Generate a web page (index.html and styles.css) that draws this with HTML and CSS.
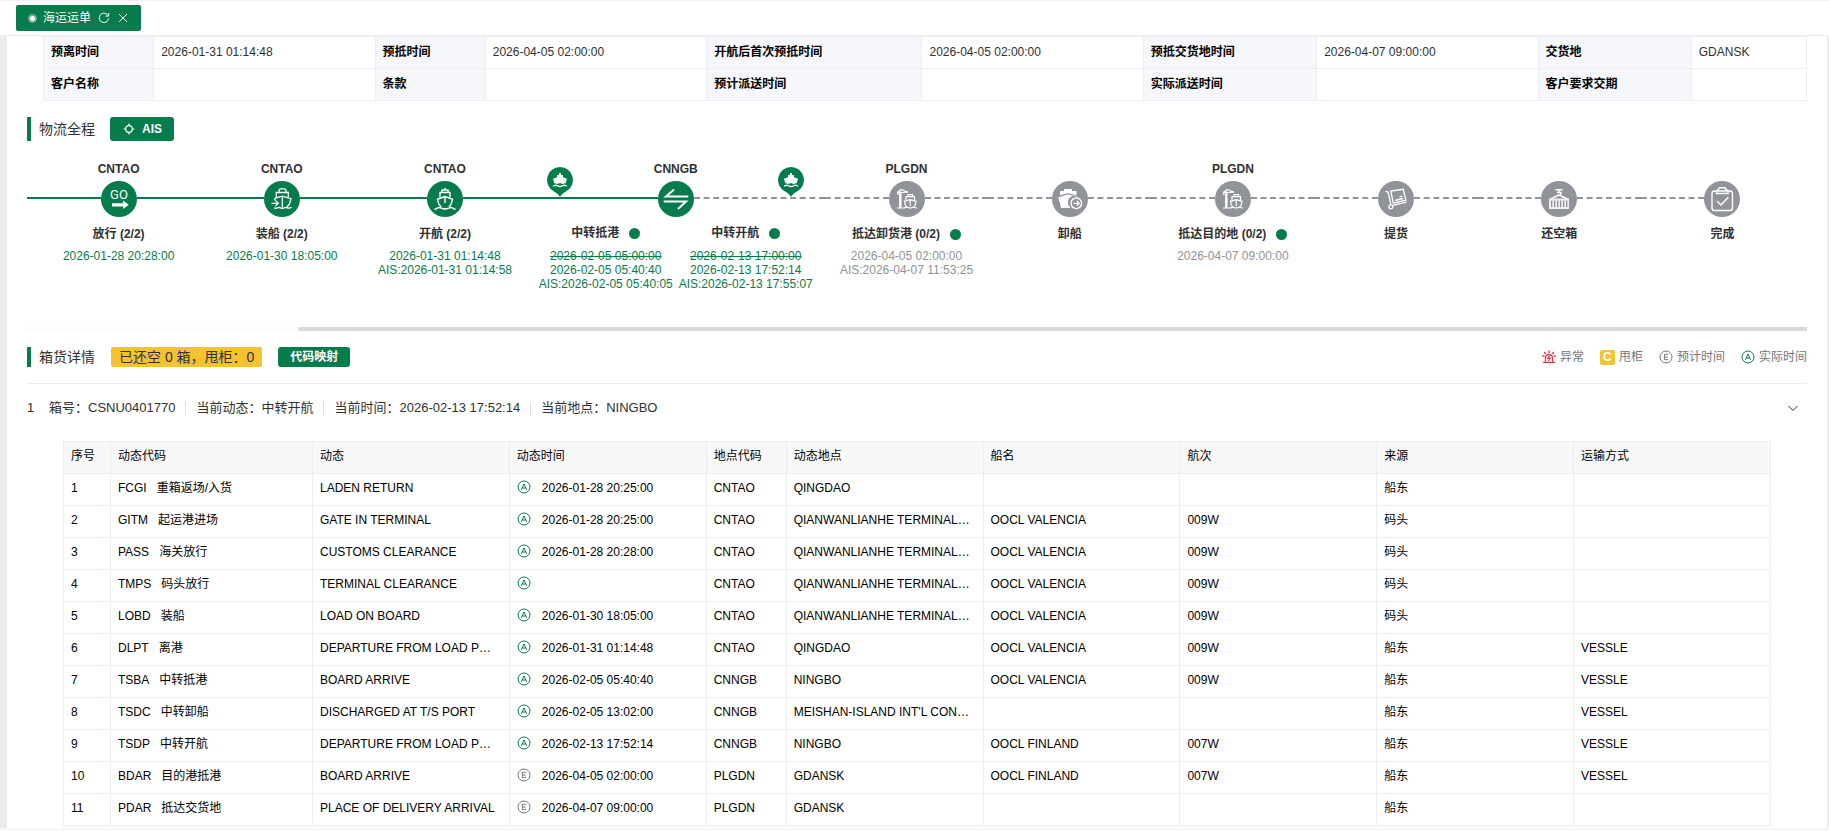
FILE: index.html
```html
<!DOCTYPE html>
<html lang="zh-CN">
<head>
<meta charset="utf-8">
<title>海运运单</title>
<link rel="stylesheet" href="styles.css">
</head>
<body>
<svg class="sprite" aria-hidden="true">
  <symbol id="i-actual" viewBox="0 0 14 14"><circle cx="7" cy="7" r="6" fill="none" stroke="currentColor"/><path d="M4.4 9.8 7 3.9l2.6 5.9M5.3 8h3.4" fill="none" stroke="currentColor"/></symbol>
  <symbol id="i-estimate" viewBox="0 0 14 14"><circle cx="7" cy="7" r="6" fill="none" stroke="currentColor"/><path d="M9.2 4.3H5.4v5.4h3.8M5.4 7h3.4" fill="none" stroke="currentColor"/></symbol>
  <symbol id="i-pin" viewBox="0 0 26 30"><path d="M13 0a13 13 0 0 1 5.6 24.7C16 26 14.500 27.500 13 30c-1.500-2.500-3-4-5.600-5.300A13 13 0 0 1 13 0Z" fill="#067b4b"/><path d="M12 6h2v2h2v2.200l4 1.500-1.400 4.600c-1 0-1.600.6-2.600.6-1.200 0-1.800-.7-3-.7s-1.800.7-3 .7c-1 0-1.600-.6-2.600-.6L6 11.700l4-1.500V8h2Z" fill="#fff"/><path d="M6 18.900c1.200 0 1.700-.7 2.800-.7 1.400 0 2 1.300 4.200 1.300s2.800-1.300 4.200-1.300c1.100 0 1.600.7 2.800.7" fill="none" stroke="#fff" stroke-width="1.400"/></symbol>
  <symbol id="i-crane" viewBox="0 0 36 36"><g fill="none" stroke="#fff" stroke-width="1.200"><path d="M11.300 10.500V27" stroke-width="2.400"/><path d="M8 27h6.500M8.300 11.500h4M8.700 11v3M12.300 8.200 8.500 11.300M12.300 8.500l6.700 2.700M12.300 11.500l6.700-.3"/><path d="M17 19.200v-3.500h8.500v3.500M19 15.500v-1.800h4.500v1.800"/><path d="M21.200 18.700l-5.700 1.600.5 3 1.700 3M21.200 18.700l5.800 1.600-.5 3-1.700 3M21.200 18.700V25"/><path d="M14.500 27c1.500 0 2-.8 3.300-.8s2 .8 3.400.8 2.100-.8 3.400-.8 1.800.8 3.200.8"/></g></symbol>
</svg>

<header class="tabs">
  <div class="tab">
    <a class="tab-link" href="#waybill"><span class="tab-dot"></span>海运运单</a>
    <button class="tab-btn" type="button" aria-label="刷新"><svg width="12" height="12" viewBox="0 0 12 12"><path d="M10.600 6.500A4.700 4.700 0 1 1 9.400 2.700L10.500 4M10.700 1v3.100H7.600" fill="none" stroke="#fff"/></svg></button>
    <button class="tab-btn" type="button" aria-label="关闭"><svg width="12" height="12" viewBox="0 0 12 12"><path d="m2 2 8 8M10 2l-8 8" fill="none" stroke="#fff"/></svg></button>
  </div>
</header>

<main class="page" id="waybill">
  <table class="info">
    <colgroup><col class="c1"><col class="c2"><col class="c1"><col class="c2"><col class="c3"><col class="c2"><col class="c4"><col class="c2"><col class="c5"><col class="c6"></colgroup>
    <tr><th>预离时间</th><td>2026-01-31 01:14:48</td><th>预抵时间</th><td>2026-04-05 02:00:00</td><th>开航后首次预抵时间</th><td>2026-04-05 02:00:00</td><th>预抵交货地时间</th><td>2026-04-07 09:00:00</td><th>交货地</th><td>GDANSK</td></tr>
    <tr><th>客户名称</th><td></td><th>条款</th><td></td><th>预计派送时间</th><td></td><th>实际派送时间</th><td></td><th>客户要求交期</th><td></td></tr>
  </table>

  <section class="progress">
    <div class="head head-progress">
      <h2 class="title">物流全程</h2>
      <button class="btn btn-ais" type="button"><svg width="12" height="12" viewBox="0 0 12 12"><circle cx="6" cy="6" r="3.300" fill="none" stroke="#fff" stroke-width="1.200"/><path d="M6 .5v2.200M6 9.300v2.200M.5 6h2.200M9.300 6h2.200" stroke="#fff" stroke-width="1.200"/></svg>AIS</button>
    </div>

    <div class="steps">
      <div class="lead"></div>
      <div class="step done">
        <div class="port">CNTAO</div>
        <div class="track"><svg class="node" viewBox="0 0 36 36"><text x="18" y="18" class="go">GO</text><path d="M11 22.200h11V19.500l5.800 4.300-5.800 4.300v-2.700H11Z" fill="#fff"/></svg></div>
        <div class="label">放行 (2/2)</div>
        <div class="times"><span>2026-01-28 20:28:00</span></div>
      </div>
      <div class="step done">
        <div class="port">CNTAO</div>
        <div class="track"><svg class="node" viewBox="0 0 36 36"><g fill="none" stroke="#fff" stroke-width="1.300"><path d="M12.300 16V11.500h12V16M15 11.500V9l1.200-1.200h4.500L22 9v2.500"/><path d="M10.500 19.500l.8-2.500 7-1.800 8.700 2.500-1.500 5.300-2.500 3M18.300 15.200V26.500"/><path d="M7.500 22.300h6.500M11.500 19.500l2.800 2.800-2.800 2.800"/><path d="M10 27c1.300.4 3 .2 4.200-.4 1.300-.6 2.400.7 4.100.7s2.800-1.300 4.200-.7c1.500.7 3.500.7 5-.3"/></g></svg></div>
        <div class="label">装船 (2/2)</div>
        <div class="times"><span>2026-01-30 18:05:00</span></div>
      </div>
      <div class="step done">
        <div class="port">CNTAO</div>
        <div class="track"><svg class="node" viewBox="0 0 36 36"><g fill="none" stroke="#fff" stroke-width="1.400"><path d="M13 16.500v-5h10v5M15 11.500V9h6v2.500M18 7v2"/><path d="M18 15.500 10.500 18.300l1.300 4.700 2.200 3M18 15.500l7.500 2.800-1.300 4.700-2.200 3M18 15.500V22"/><path d="M7.500 28.200c2-.2 2.800-1.700 4.500-1.700 2 0 3 1.500 6 1.500s4-1.500 6-1.500c1.700 0 2.500 1.500 4.500 1.700"/></g></svg></div>
        <div class="label">开航 (2/2)</div>
        <div class="times"><span>2026-01-31 01:14:48</span><span>AIS:2026-01-31 01:14:58</span></div>
      </div>
      <div class="step wide half">
        <div class="port">CNNGB</div>
        <div class="track"><svg class="pin pin-a"><use href="#i-pin"/></svg><svg class="node" viewBox="0 0 36 36"><path d="M29.500 15.500H8L15.500 9M6.500 20.500H28L20.500 27.500" fill="none" stroke="#fff" stroke-width="2" stroke-linecap="round"/></svg><svg class="pin pin-b"><use href="#i-pin"/></svg></div>
        <div class="pair">
          <div class="leg"><div class="label">中转抵港<i class="dot"></i></div><div class="times"><del>2026-02-05 05:00:00</del><span>2026-02-05 05:40:40</span><span>AIS:2026-02-05 05:40:05</span></div></div>
          <div class="leg"><div class="label">中转开航<i class="dot"></i></div><div class="times"><del>2026-02-13 17:00:00</del><span>2026-02-13 17:52:14</span><span>AIS:2026-02-13 17:55:07</span></div></div>
        </div>
      </div>
      <div class="step">
        <div class="port">PLGDN</div>
        <div class="track"><svg class="node" viewBox="0 0 36 36"><use href="#i-crane"/></svg></div>
        <div class="label">抵达卸货港 (0/2)<i class="dot"></i></div>
        <div class="times"><span>2026-04-05 02:00:00</span><span>AIS:2026-04-07 11:53:25</span></div>
      </div>
      <div class="step">
        <div class="port"></div>
        <div class="track"><svg class="node" viewBox="0 0 36 36"><path d="M12 8h8v2h4.500v4.200L16 12.200l-8 2V10h4ZM16 13.500l10.500 2.400A6.500 6.500 0 0 0 18.800 27H9l-1-5-2-5.500Z" fill="#fff"/><circle cx="24.300" cy="22.300" r="5.300" fill="none" stroke="#fff" stroke-width="1.400"/><path d="M21.500 22.300h5.500M24.800 19.900l2.400 2.400-2.400 2.400" fill="none" stroke="#fff" stroke-width="1.300"/></svg></div>
        <div class="label">卸船</div>
      </div>
      <div class="step">
        <div class="port">PLGDN</div>
        <div class="track"><svg class="node" viewBox="0 0 36 36"><use href="#i-crane"/></svg></div>
        <div class="label">抵达目的地 (0/2)<i class="dot"></i></div>
        <div class="times"><span>2026-04-07 09:00:00</span></div>
      </div>
      <div class="step">
        <div class="port"></div>
        <div class="track"><svg class="node" viewBox="0 0 36 36"><g fill="none" stroke="#fff" stroke-width="1.300"><path d="M7.500 10.300l2.700.7 2.600 12.500M14 24.700l14.500-3.500"/><circle cx="12.800" cy="25.800" r="2"/><path d="M12.800 10l12.500-1.700 2.500 10.900-12.500 3Z"/><path d="M17 19.500l8-2M21.500 16l3-.8"/></g></svg></div>
        <div class="label">提货</div>
      </div>
      <div class="step">
        <div class="port"></div>
        <div class="track"><svg class="node" viewBox="0 0 36 36"><path d="M14.500 8.700h7M18 8.700v3.300M16 11.500h4v1.500l-2 1.500M18 14l-8.500 4M18 14l8.500 4" fill="none" stroke="#fff" stroke-width="1.400"/><path d="M8 17.500h20V28H8ZM10 19.500v6.500h1.300v-6.500ZM13 19.500v6.500h1.300v-6.500ZM16 19.500v6.500h1.300v-6.500ZM19 19.500v6.500h1.300v-6.500ZM22 19.500v6.500h1.300v-6.500ZM25 19.500v6.500h1.300v-6.500Z" fill="#fff" fill-rule="evenodd" opacity=".85"/></svg></div>
        <div class="label">还空箱</div>
      </div>
      <div class="step last">
        <div class="port"></div>
        <div class="track"><svg class="node" viewBox="0 0 36 36"><g fill="none" stroke="#fff" stroke-width="1.400"><rect x="8" y="10" width="20.500" height="19.500" rx="2.500"/><path d="M12.500 12.500h11.500V9.500l-1-.5h-.8l-1-2.200h-6l-1 2.200h-.7l-1 .5Z"/><path d="M13.500 20.500l3.500 3.500 7-7.500" stroke-linecap="round"/></g></svg></div>
        <div class="label">完成</div>
      </div>
    </div>
    <div class="scroll"><div class="thumb"></div></div>
  </section>

  <section class="cargo">
    <div class="head head-cargo">
      <h2 class="title">箱货详情</h2>
      <span class="tag">已还空 0 箱，甩柜：0</span>
      <button class="btn btn-map" type="button">代码映射</button>
      <ul class="legend">
        <li><svg width="14" height="14" viewBox="0 0 14 14"><path d="M3.500 12V8a3.500 3.500 0 0 1 7 0v4M1 12.400h12M7 .5v2.700M2.200 2l1.600 2M11.800 2l-1.600 2M.3 6h2.200M13.700 6h-2.200M7.500 5.800 6 8.400h2L6.500 11" fill="none" stroke="#f0324b" stroke-width="1.300"/></svg>异常</li>
        <li><b class="c-mark">C</b>甩柜</li>
        <li><svg class="mark"><use href="#i-estimate"/></svg>预计时间</li>
        <li><svg class="mark green"><use href="#i-actual"/></svg>实际时间</li>
      </ul>
    </div>

    <button class="summary" type="button" aria-expanded="true">
      <span class="num">1</span>
      <span class="item">箱号：CSNU0401770</span>
      <span class="item">当前动态：中转开航</span>
      <span class="item">当前时间：2026-02-13 17:52:14</span>
      <span class="item">当前地点：NINGBO</span>
      <svg class="chevron" width="12" height="12" viewBox="0 0 12 12"><path d="m1.500 4 4.500 4.500L10.500 4" fill="none" stroke="#303133"/></svg>
    </button>

    <div class="detail">
      <table class="events">
        <colgroup><col class="e1"><col class="e2"><col><col><col class="e5"><col><col><col><col><col></colgroup>
        <thead><tr><th>序号</th><th>动态代码</th><th>动态</th><th>动态时间</th><th>地点代码</th><th>动态地点</th><th>船名</th><th>航次</th><th>来源</th><th>运输方式</th></tr></thead>
        <tbody>
          <tr><td>1</td><td><span class="code">FCGI</span>重箱返场/入货</td><td>LADEN RETURN</td><td><svg class="mark green"><use href="#i-actual"/></svg>2026-01-28 20:25:00</td><td>CNTAO</td><td>QINGDAO</td><td></td><td></td><td>船东</td><td></td></tr>
          <tr><td>2</td><td><span class="code">GITM</span>起运港进场</td><td>GATE IN TERMINAL</td><td><svg class="mark green"><use href="#i-actual"/></svg>2026-01-28 20:25:00</td><td>CNTAO</td><td>QIANWANLIANHE TERMINAL…</td><td>OOCL VALENCIA</td><td>009W</td><td>码头</td><td></td></tr>
          <tr><td>3</td><td><span class="code">PASS</span>海关放行</td><td>CUSTOMS CLEARANCE</td><td><svg class="mark green"><use href="#i-actual"/></svg>2026-01-28 20:28:00</td><td>CNTAO</td><td>QIANWANLIANHE TERMINAL…</td><td>OOCL VALENCIA</td><td>009W</td><td>码头</td><td></td></tr>
          <tr><td>4</td><td><span class="code">TMPS</span>码头放行</td><td>TERMINAL CLEARANCE</td><td><svg class="mark green"><use href="#i-actual"/></svg></td><td>CNTAO</td><td>QIANWANLIANHE TERMINAL…</td><td>OOCL VALENCIA</td><td>009W</td><td>码头</td><td></td></tr>
          <tr><td>5</td><td><span class="code">LOBD</span>装船</td><td>LOAD ON BOARD</td><td><svg class="mark green"><use href="#i-actual"/></svg>2026-01-30 18:05:00</td><td>CNTAO</td><td>QIANWANLIANHE TERMINAL…</td><td>OOCL VALENCIA</td><td>009W</td><td>码头</td><td></td></tr>
          <tr><td>6</td><td><span class="code">DLPT</span>离港</td><td>DEPARTURE FROM LOAD P…</td><td><svg class="mark green"><use href="#i-actual"/></svg>2026-01-31 01:14:48</td><td>CNTAO</td><td>QINGDAO</td><td>OOCL VALENCIA</td><td>009W</td><td>船东</td><td>VESSLE</td></tr>
          <tr><td>7</td><td><span class="code">TSBA</span>中转抵港</td><td>BOARD ARRIVE</td><td><svg class="mark green"><use href="#i-actual"/></svg>2026-02-05 05:40:40</td><td>CNNGB</td><td>NINGBO</td><td>OOCL VALENCIA</td><td>009W</td><td>船东</td><td>VESSLE</td></tr>
          <tr><td>8</td><td><span class="code">TSDC</span>中转卸船</td><td>DISCHARGED AT T/S PORT</td><td><svg class="mark green"><use href="#i-actual"/></svg>2026-02-05 13:02:00</td><td>CNNGB</td><td>MEISHAN-ISLAND INT'L CON…</td><td></td><td></td><td>船东</td><td>VESSEL</td></tr>
          <tr><td>9</td><td><span class="code">TSDP</span>中转开航</td><td>DEPARTURE FROM LOAD P…</td><td><svg class="mark green"><use href="#i-actual"/></svg>2026-02-13 17:52:14</td><td>CNNGB</td><td>NINGBO</td><td>OOCL FINLAND</td><td>007W</td><td>船东</td><td>VESSLE</td></tr>
          <tr><td>10</td><td><span class="code">BDAR</span>目的港抵港</td><td>BOARD ARRIVE</td><td><svg class="mark"><use href="#i-estimate"/></svg>2026-04-05 02:00:00</td><td>PLGDN</td><td>GDANSK</td><td>OOCL FINLAND</td><td>007W</td><td>船东</td><td>VESSEL</td></tr>
          <tr><td>11</td><td><span class="code">PDAR</span>抵达交货地</td><td>PLACE OF DELIVERY ARRIVAL</td><td><svg class="mark"><use href="#i-estimate"/></svg>2026-04-07 09:00:00</td><td>PLGDN</td><td>GDANSK</td><td></td><td></td><td>船东</td><td></td></tr>
        </tbody>
      </table>
    </div>
  </section>
</main>
</body>
</html>
```
FILE: styles.css
```css
:root {
  --green: #067b4b;
  --grey: #909399;
  --line: #ebeef5;
  --text: #303133;
}
* { box-sizing: border-box; }
body {
  margin: 0;
  background: #f8f8f8;
  color: var(--text);
  font: 12px/16px "Liberation Sans", "Noto Sans CJK SC", sans-serif;
}
button { font: inherit; border: 0; cursor: pointer; }
.sprite { display: none; }

.tabs {
  display: flex;
  padding: 4px 16px;
  border-top: 1px solid #f0f0f0;
  border-bottom: 1px solid #ebedf0;
  background: #fff;
}
.tab {
  display: flex;
  align-items: center;
  gap: 7px;
  height: 26px;
  padding: 0 12px;
  border-radius: 2px;
  background: var(--green);
}
.tab-link {
  display: flex;
  align-items: center;
  gap: 6px;
  color: #fff;
  text-decoration: none;
}
.tab-dot {
  width: 9px;
  height: 9px;
  border: 2px solid #6fae93;
  border-radius: 50%;
  background: #fff;
}
.tab-btn { display: flex; padding: 0; background: none; }

.page {
  margin: 0 2px 4px 0;
  padding: 0 20px 2px 20px;
  border-left: 7px solid #ececee;
  background: #fff;
  box-shadow: 2px 0 #ebebed;
}

.info {
  width: calc(100% - 16px);
  margin-left: 16px;
  border-collapse: collapse;
  table-layout: fixed;
}
.info th, .info td {
  height: 32px;
  padding: 0 7px 2px;
  border: 1px solid var(--line);
  text-align: left;
}
.info th { background: #f5f7fa; color: #000; font-weight: 700; }
.c1 { width: 110px; }
.c2 { width: 221px; }
.c3 { width: 215px; }
.c4 { width: 173px; }
.c5 { width: 153px; }
.c6 { width: 115px; }

.head { display: flex; align-items: center; }
.head-progress { margin-top: 16px; }
.title {
  margin: 0;
  padding-left: 8px;
  border-left: 4px solid var(--green);
  font-size: 14px;
  font-weight: 400;
}
.head-progress .title { line-height: 24px; }
.head-cargo .title { line-height: 20px; }
.btn {
  display: flex;
  align-items: center;
  border-radius: 3px;
  background: var(--green);
  color: #fff;
}
.btn-ais { gap: 7px; height: 24px; margin-left: 15px; padding: 0 12px 0 13px; font-weight: 600; }

.steps { display: flex; height: 186px; padding: 20px 3px 0 0; }
.lead { flex: 0 0 10px; height: 2px; margin-top: 36px; background: var(--green); }
.step { flex: 163 1 0; min-width: 0; text-align: center; }
.step.wide { flex-grow: 298; }
.port { height: 16px; margin-bottom: 4px; font-weight: 600; }
.track {
  position: relative;
  display: flex;
  align-items: center;
  height: 36px;
}
.track::before, .track::after {
  content: "";
  flex: 1;
  margin-bottom: 2px;
  border-top: 2px dashed var(--grey);
}
.done .track::before, .done .track::after, .half .track::before { border-top: 2px solid var(--green); }
.last .track::after { border-color: transparent; }
.node { flex: none; width: 36px; height: 36px; border-radius: 50%; background: var(--grey); }
.done .node, .half .node { background: var(--green); }
.go { font: 13px Roboto, sans-serif; fill: #fff; text-anchor: middle; }
.pin { position: absolute; bottom: 20px; width: 26px; height: 30px; }
.pin-a { left: 20px; }
.pin-b { right: 21px; }
.label {
  display: flex;
  align-items: center;
  justify-content: center;
  height: 16px;
  margin-top: 9px;
  font-weight: 600;
  white-space: nowrap;
}
.leg .label { margin-top: 8px; }
.dot { width: 11px; height: 11px; margin-left: 10px; border-radius: 50%; background: var(--green); }
.times {
  display: flex;
  flex-direction: column;
  align-items: center;
  margin-top: 7px;
  color: var(--grey);
  line-height: 14px;
  white-space: nowrap;
}
.leg .times { margin-top: 8px; }
.done .times, .half .times { color: var(--green); }
.pair { display: flex; justify-content: center; }
.leg { flex: 0 0 140px; }
.scroll { height: 4px; background: #fafafa; }
.thumb { height: 4px; margin-left: 15.2%; border-radius: 2px 0 0 2px; background: #d8d9db; }

.head-cargo { height: 53px; border-bottom: 1px solid var(--line); }
.tag {
  margin-left: 16px;
  padding: 0 8px;
  border-radius: 2px;
  background: #f5c330;
  font-size: 14px;
  line-height: 20px;
}
.btn-map { height: 20px; margin-left: 16px; padding: 0 12px; font-weight: 700; }
.legend {
  display: flex;
  gap: 16px;
  margin: 0 0 0 auto;
  padding: 0;
  color: #73767a;
  list-style: none;
}
.legend li { display: flex; align-items: center; gap: 4px; }
.c-mark {
  width: 15px;
  border-radius: 2px;
  background: #f5c330;
  color: #fff;
  line-height: 15px;
  text-align: center;
}
.mark { flex: none; width: 14px; height: 14px; color: #73767a; }
.mark.green { color: var(--green); }

.summary {
  display: flex;
  align-items: center;
  width: 100%;
  height: 48px;
  padding: 0 8px 0 0;
  background: none;
  color: var(--text);
  font-size: 13px;
}
.num { width: 22px; text-align: left; }
.item { display: flex; align-items: center; }
.item + .item::before {
  content: "";
  width: 1px;
  height: 13px;
  margin: 0 10px;
  background: #dcdfe6;
}
.chevron { margin-left: auto; }

.detail { padding: 9px 36px 0; }
.events {
  width: 100%;
  border-collapse: collapse;
  table-layout: fixed;
  color: #000;
}
.events th, .events td {
  height: 32px;
  padding: 0 7px 3px;
  border: 1px solid var(--line);
  font-weight: 400;
  text-align: left;
  white-space: nowrap;
}
.events th { background: #f8f8f9; }
.e1 { width: 47px; }
.e2 { width: 202px; }
.e5 { width: 80px; }
.code { margin-right: 10px; }
.events .mark { margin-right: 11px; vertical-align: -2px; }
```
